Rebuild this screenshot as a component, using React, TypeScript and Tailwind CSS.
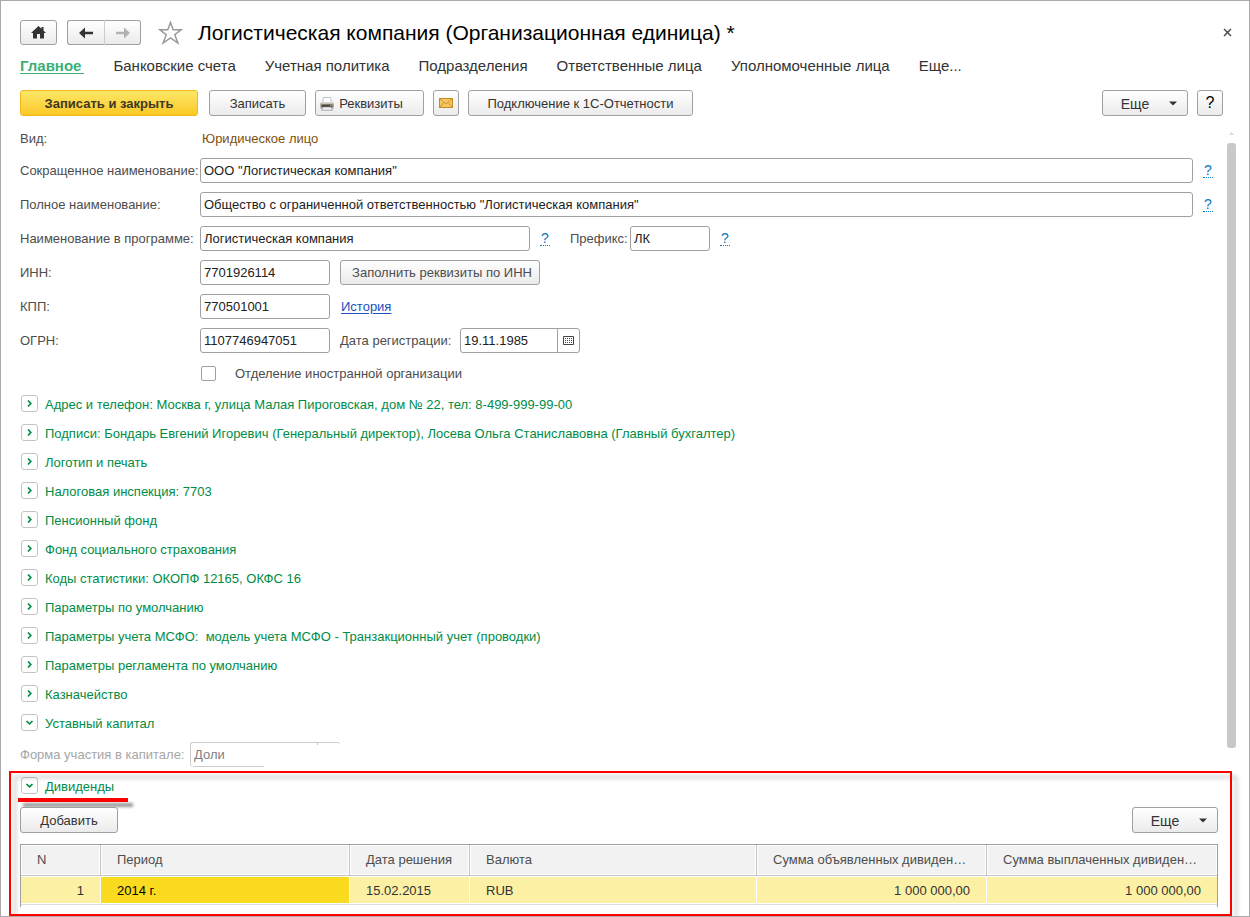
import { useState, type ReactNode } from 'react';
import clsx from 'clsx';

const TABS = [
  'Главное',
  'Банковские счета',
  'Учетная политика',
  'Подразделения',
  'Ответственные лица',
  'Уполномоченные лица',
  'Еще...',
];

const SECTIONS = [
  'Адрес и телефон: Москва г, улица Малая Пироговская, дом № 22, тел: 8-499-999-99-00',
  'Подписи: Бондарь Евгений Игоревич (Генеральный директор), Лосева Ольга Станиславовна (Главный бухгалтер)',
  'Логотип и печать',
  'Налоговая инспекция: 7703',
  'Пенсионный фонд',
  'Фонд социального страхования',
  'Коды статистики: ОКОПФ 12165, ОКФС 16',
  'Параметры по умолчанию',
  'Параметры учета МСФО:  модель учета МСФО - Транзакционный учет (проводки)',
  'Параметры регламента по умолчанию',
  'Казначейство',
];

const COLUMNS = [
  { title: 'N', width: 'w-20' },
  { title: 'Период', width: 'w-[249px]' },
  { title: 'Дата решения', width: 'w-[120px]' },
  { title: 'Валюта', width: '' },
  { title: 'Сумма объявленных дивидендов', width: 'w-[230px]' },
  { title: 'Сумма выплаченных дивидендов', width: 'w-[230px]' },
];

const ROWS = [['1', '2014 г.', '15.02.2015', 'RUB', '1 000 000,00', '1 000 000,00']];

const BUTTON = 'flex items-center justify-center rounded-[3px] border border-[#a0a0a0] bg-linear-to-b from-white to-[#ebebeb]';
const INPUT = 'h-[25px] rounded-[3px] border border-[#a0a0a0] bg-white px-[3px] text-[#222] outline-none';

function Button({ className, label, children }: { className: string; label?: string; children: ReactNode }) {
  return (
    <button type="button" aria-label={label} className={clsx(BUTTON, className)}>
      {children}
    </button>
  );
}

function Help() {
  return (
    <a href="#help" className="ml-[10px] w-[10px] border-b border-dotted border-[#0a78c0] text-center text-sm leading-[13px] text-[#0a78c0]">
      ?
    </a>
  );
}

function Field({ id, label, value, className, children }: { id: string; label: string; value: string; className: string; children?: ReactNode }) {
  return (
    <div className="flex items-center">
      <label htmlFor={id} className="w-[180px] shrink-0 whitespace-nowrap">{label}</label>
      <input id={id} defaultValue={value} className={clsx(INPUT, className)} />
      {children}
    </div>
  );
}

function Section({ title, open = false, className }: { title: string; open?: boolean; className: string }) {
  const [expanded, setExpanded] = useState(open);
  return (
    <button
      type="button"
      aria-expanded={expanded}
      onClick={() => setExpanded(!expanded)}
      className={clsx('flex items-center gap-[7px] pl-px text-left leading-[17px] whitespace-pre text-[#008c46]', className)}
    >
      <span className="flex size-[17px] items-center justify-center rounded-[3px] border border-[#c4c4c4] bg-white">
        <svg width="9" height="9" viewBox="0 0 9 9" fill="none" stroke="#008c46" strokeWidth="1.7">
          <path d={expanded ? 'M1.5 3L4.5 5.8L7.5 3' : 'M3 1.5L5.8 4.5L3 7.5'} />
        </svg>
      </span>
      <span className="pt-px">{title}</span>
    </button>
  );
}

function MoreButton() {
  return (
    <Button className="h-[26px] w-[86px] gap-5 pt-px pl-2 text-sm text-[#333]">
      Еще
      <svg width="8" height="5" viewBox="0 0 8 5" fill="#333">
        <path d="M0 .5H8L4 4.5Z" />
      </svg>
    </Button>
  );
}

export default function App() {
  return (
    <main className="flex min-h-screen flex-col overflow-hidden border border-[#aaa] bg-white font-['Liberation_Sans',Arial,sans-serif] text-[13px] leading-4 text-[#4d4d4d]">
      {/* Заголовок окна */}
      <header className="mt-[19px] flex h-[25px] items-center pr-[17px] pl-[19px]">
        <Button label="Домой" className="h-[25px] w-[37px]">
          <svg width="15" height="13" viewBox="0 0 15 13" fill="#333">
            <path d="M7.5 0L0 7H2V12.5H6V8H9V12.5H13V7H15L12.5 4.6V1H10.5V2.8Z" />
          </svg>
        </Button>
        <div className="ml-[10px] flex">
          <Button label="Назад" className="h-[25px] w-[38px] rounded-r-none border-r-[#ccc]">
            <svg width="14" height="12" viewBox="0 0 14 12" fill="#333">
              <path d="M0 6L6 .5V4.7H14V7.3H6V11.5Z" />
            </svg>
          </Button>
          <Button label="Вперед" className="h-[25px] w-9 rounded-l-none border-l-0">
            <svg width="14" height="12" viewBox="0 0 14 12" fill="#b2b2b2">
              <path d="M14 6L8 .5V4.7H0V7.3H8V11.5Z" />
            </svg>
          </Button>
        </div>
        <button type="button" aria-label="В избранное" className="ml-[17px]">
          <svg width="25" height="25" viewBox="0 0 25 25" fill="none" stroke="#999" strokeWidth="1.5">
            <path d="M12.5 2.5L15.2 9.8H23L16.8 14.7L19.9 23L12.5 18L5.1 23L8.2 14.7L2 9.8H9.8Z" />
          </svg>
        </button>
        <h1 className="ml-[15px] flex-1 text-[21px] leading-6 text-black">Логистическая компания (Организационная единица) *</h1>
        <button type="button" aria-label="Закрыть">
          <svg width="9" height="9" viewBox="0 0 9 9" stroke="#444" strokeWidth="1.4">
            <path d="M1 1L8 8M8 1L1 8" />
          </svg>
        </button>
      </header>

      <nav className="mt-[13px] flex gap-[29px] pl-[19px] text-[15px] whitespace-nowrap text-[#333]">
        {TABS.map((tab, i) => (
          <a key={tab} href="#tab" className={clsx('border-b leading-[15px]', i === 0 ? 'border-[#3bb077] pr-[3px] font-bold text-[#3bb077]' : 'border-transparent')}>
            {tab}
          </a>
        ))}
      </nav>

      {/* Командная панель */}
      <div className="mt-4 flex items-center gap-[9px] pr-[26px] pl-[19px] text-[#333]">
        <button type="button" className="mr-0.5 h-[26px] w-[178px] rounded-[3px] border border-[#f0b81c] bg-linear-to-b from-[#fde765] to-[#fac81e] pt-px font-bold text-[#403820]">
          Записать и закрыть
        </button>
        <Button className="h-[26px] w-[97px] pt-px">Записать</Button>
        <Button className="h-[26px] w-[109px] gap-[5px] pt-px pr-4">
          <svg width="14" height="14" viewBox="0 0 14 14">
            <path d="M3.5 .5H10.5L11.5 6H2.5Z" fill="#fff" stroke="#a9b4c2" strokeWidth=".8" />
            <path d="M2 5H12L14 6.5V11.5H0V6.5Z" fill="#b9b2a8" />
            <path d="M2 5H12L13 6.5H1Z" fill="#dcd8d0" />
            <path d="M1.5 7.5H12.5V10H1.5Z" fill="#4a4644" />
            <path d="M3 10H11L12.5 13.2H1.5Z" fill="#eef2fa" stroke="#8f8a84" strokeWidth=".7" />
            <path d="M10 8.6H12" stroke="#d8823c" />
          </svg>
          Реквизиты
        </Button>
        <Button label="Отправить" className="h-[26px] w-[26px]">
          <svg width="14" height="10" viewBox="0 0 14 10" stroke="#c48a20">
            <path d="M.5 .5H13.5V9.5H.5Z" fill="#f4c763" />
            <path d="M.5 .5L7 6L13.5 .5M.5 9.5L5 4.5M13.5 9.5L9 4.5" fill="none" strokeWidth=".8" />
          </svg>
        </Button>
        <Button className="h-[26px] w-[225px] pt-px">Подключение к 1С-Отчетности</Button>
        <div className="flex-1" />
        <MoreButton />
        <Button label="Справка" className="h-[26px] w-[26px] text-base text-black">?</Button>
      </div>

      <div className="mt-[14px] flex pr-[13px] pl-[19px]">
        <form className="flex flex-1 flex-col gap-[9px]">
          <div className="mb-px flex h-[18px] items-center">
            <span className="w-[182px]">Вид:</span>
            <span className="text-[#80500a]">Юридическое лицо</span>
          </div>
          <Field id="short" label="Сокращенное наименование:" value={'ООО "Логистическая компания"'} className="flex-1">
            <Help />
            <span className="w-[5px]" />
          </Field>
          <Field id="full" label="Полное наименование:" value={'Общество с ограниченной ответственностью "Логистическая компания"'} className="flex-1">
            <Help />
            <span className="w-[5px]" />
          </Field>
          <Field id="name" label="Наименование в программе:" value="Логистическая компания" className="w-[330px]">
            <Help />
            <label htmlFor="prefix" className="ml-5 w-[60px]">Префикс:</label>
            <input id="prefix" defaultValue="ЛК" className={clsx(INPUT, 'w-20')} />
            <Help />
          </Field>
          <Field id="inn" label="ИНН:" value="7701926114" className="w-[130px]">
            <Button className="ml-[10px] h-[25px] w-[200px] pl-1">Заполнить реквизиты по ИНН</Button>
          </Field>
          <Field id="kpp" label="КПП:" value="770501001" className="w-[130px]">
            <a href="#history" className="ml-[11px] text-[#1c4fc0] underline underline-offset-2">История</a>
          </Field>
          <Field id="ogrn" label="ОГРН:" value="1107746947051" className="w-[130px]">
            <label htmlFor="date" className="ml-[10px] w-[120px]">Дата регистрации:</label>
            <div className={clsx(INPUT, 'flex w-[120px] items-stretch pr-0')}>
              <input id="date" defaultValue="19.11.1985" className="w-0 flex-1 outline-none" />
              <button type="button" aria-label="Выбрать дату" className="flex w-[22px] items-center justify-center border-l border-[#a0a0a0]">
                <svg width="11" height="9" viewBox="0 0 11 9" fill="none" stroke="#444">
                  <path d="M.5 .5H10.5V8.5H.5Z" />
                  <path d="M2 2.5H9M2 4.5H9M2 6.5H9" strokeDasharray="1 1" />
                </svg>
              </button>
            </div>
          </Field>
          <label className="mt-1 flex h-[15px] items-center gap-[19px] pl-[181px]">
            <input type="checkbox" className="size-[15px] appearance-none rounded-[2px] border border-[#a0a0a0] bg-white" />
            Отделение иностранной организации
          </label>
          <div className="-mt-px flex flex-col items-start">
            {SECTIONS.map((title) => (
              <Section key={title} title={title} className="h-[29px]" />
            ))}
            <Section title="Уставный капитал" open className="h-[29px]" />
            <div className="mt-[5px] flex items-center text-[#a6a6a6]">
              <label htmlFor="share" className="w-[170px]">Форма участия в капитале:</label>
              <div className="relative h-[25px] w-[150px] rounded-l-[3px] rounded-tr-[3px] border-t border-l border-[#ccc]">
                <select id="share" disabled className="h-[23px] w-full appearance-none bg-transparent pl-[3px] text-[#808080] opacity-100">
                  <option>Доли</option>
                </select>
                <span className="absolute bottom-0 left-0.5 h-px w-[71px] bg-[#ccc]" />
                <span className="absolute top-0 right-[22px] h-0.5 w-px bg-[#ccc]" />
              </div>
            </div>
          </div>
        </form>

        {/* Полоса прокрутки */}
        <div className="ml-[9px] flex w-[9px] flex-col items-center">
          <svg width="5" height="3" viewBox="0 0 5 3" fill="#d8d8d8" className="mt-0.5">
            <path d="M0 3L2.5 0L5 3Z" />
          </svg>
          <div className="mt-2 mb-[19px] w-full flex-1 rounded-[3px] bg-[#c8c8c8]" />
        </div>
      </div>

      {/* Дивиденды */}
      <section className="relative mt-1 mr-[17px] ml-2 pt-1.5 pr-[14px] pb-[9px] pl-[11px]">
        <div className="relative">
          <Section title="Дивиденды" open className="h-[17px]" />
          <span className="absolute top-[21px] -left-0.5 h-1 w-[110px] bg-[#f00] shadow-[5px_5px_3px_rgba(0,0,0,0.4)]" />
        </div>
        <div className="relative mt-[13px] flex justify-between text-[#333]">
          <Button className="h-[26px] w-[98px] pt-px">Добавить</Button>
          <MoreButton />
        </div>
        <div className="mt-[11px] border border-b-0 border-[#a0a0a0] pb-0.5">
          <table className="w-full table-fixed border-separate border-spacing-0 border-b border-[#ddd]">
            <thead>
              <tr className="h-[31px]">
                {COLUMNS.map((col) => (
                  <th
                    key={col.title}
                    className={clsx('truncate border-r border-b border-[#c4c4c4] bg-[#f2f2f2] px-4 text-left font-normal inset-shadow-[0_0_0_1px_#fff] last:border-r-0', col.width)}
                  >
                    {col.title}
                  </th>
                ))}
              </tr>
            </thead>
            <tbody>
              {ROWS.map((row) => (
                <tr key={row[0]} className="h-7">
                  {row.map((cell, i) => (
                    <td
                      key={i}
                      className={clsx(
                        'border-y border-r border-white px-4 pt-px last:border-r-0',
                        i === 1 ? 'bg-[#fbdb20] text-black' : 'bg-[#fcf0a4] text-[#333]',
                        (i === 0 || i > 3) && 'text-right',
                      )}
                    >
                      {cell}
                    </td>
                  ))}
                </tr>
              ))}
            </tbody>
          </table>
        </div>
        <div className="pointer-events-none absolute inset-0 border-2 border-[#f00] drop-shadow-[5px_5px_2px_rgba(0,0,0,0.25)]" />
      </section>
    </main>
  );
}
